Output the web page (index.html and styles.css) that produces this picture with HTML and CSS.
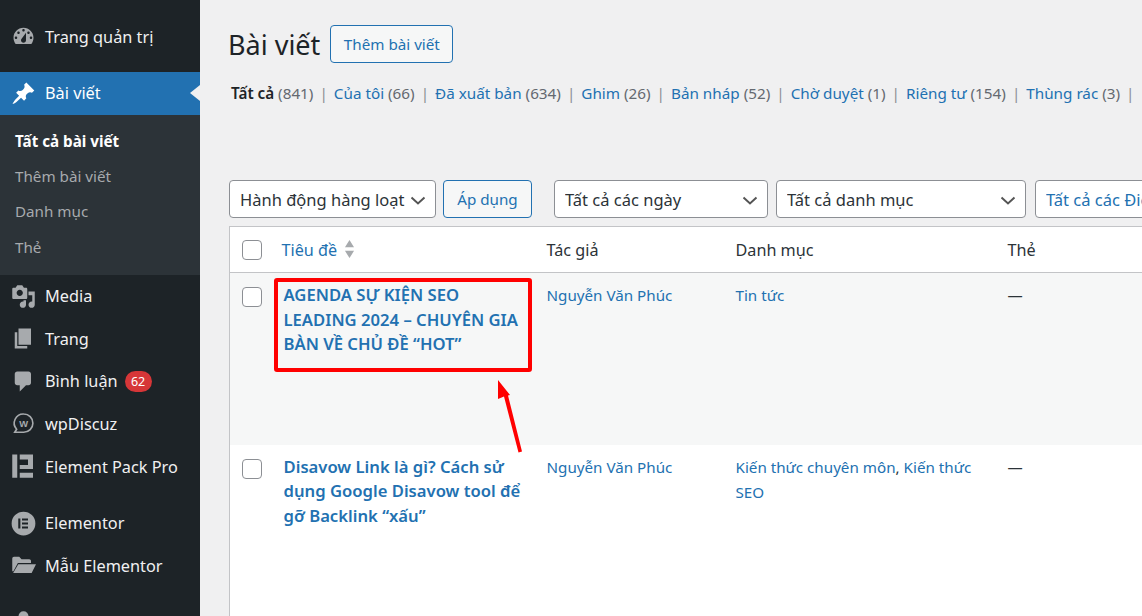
FILE: index.html

```html
<!DOCTYPE html>
<html>
    <head>
        <meta charset="UTF-8">
        <meta name="viewport" content="width=device-width, initial-scale=1.0">
        <title>Bài viết</title>
        <link rel="stylesheet" href="styles.css">
    </head>
    <body>
        <div class="admin">
            <nav class="sidebar">
                <a class="menu-item first" href="#">
                    <svg class="menu-icon" viewBox="0 0 20 20"><path d="M3.76 16h12.48c1.1-1.37 1.76-3.11 1.76-5 0-4.42-3.58-8-8-8s-8 3.58-8 8c0 1.89.66 3.63 1.76 5zM10 4c.55 0 1 .45 1 1s-.45 1-1 1-1-.45-1-1 .45-1 1-1zM6 6c.55 0 1 .45 1 1s-.45 1-1 1-1-.45-1-1 .45-1 1-1zm8 0c.55 0 1 .45 1 1s-.45 1-1 1-1-.45-1-1 .45-1 1-1zm-5.37 5.55L12 7v6c0 1.1-.9 2-2 2s-2-.9-2-2c0-.57.24-1.08.63-1.45zM4 10c.55 0 1 .45 1 1s-.45 1-1 1-1-.45-1-1 .45-1 1-1zm12 0c.55 0 1 .45 1 1s-.45 1-1 1-1-.45-1-1 .45-1 1-1z" fill-rule="evenodd"/></svg>
                    <span>Trang quản trị</span>
                </a>
                <a class="menu-item current" href="#">
                    <svg class="menu-icon" viewBox="0 0 20 20"><path d="M10.44 3.02l1.82-1.82 6.36 6.35-1.83 1.82c-1.05-.68-2.48-.57-3.41.36l-.75.75c-.92.93-1.04 2.35-.35 3.41l-1.83 1.82-2.41-2.41-2.8 2.79c-.42.42-3.38 2.71-3.8 2.29s1.86-3.39 2.28-3.81l2.79-2.79L4.1 9.36l1.83-1.82c1.05.69 2.48.57 3.4-.36l.75-.75c.93-.92 1.05-2.35.36-3.41z"/></svg>
                    <span>Bài viết</span>
                </a>
                <ul class="submenu">
                    <li class="active">Tất cả bài viết</li>
                    <li>Thêm bài viết</li>
                    <li>Danh mục</li>
                    <li>Thẻ</li>
                </ul>
                <a class="menu-item" href="#">
                    <svg class="menu-icon" viewBox="0 0 20 20"><path d="M13 11V4c0-.55-.45-1-1-1h-1.67L9 1H5L3.67 3H2c-.55 0-1 .45-1 1v7c0 .55.45 1 1 1h10c.55 0 1-.45 1-1zM7 4.5c1.38 0 2.5 1.12 2.5 2.5S8.38 9.5 7 9.5 4.5 8.38 4.5 7 5.62 4.5 7 4.5zM14 6h5v10.5c0 1.38-1.12 2.5-2.5 2.5S14 17.88 14 16.5s1.12-2.5 2.5-2.5c.17 0 .34.02.5.05V9h-3V6zm-4 8.05V13h2v3.5c0 1.38-1.12 2.5-2.5 2.5S7 17.88 7 16.5 8.12 14 9.5 14c.17 0 .34.02.5.05z" fill-rule="evenodd"/></svg>
                    <span>Media</span>
                </a>
                <a class="menu-item" href="#">
                    <svg class="menu-icon" viewBox="0 0 20 20"><path d="M6 15V2h10v13H6zm-1 1h8v2H3V5h2v11z"/></svg>
                    <span>Trang</span>
                </a>
                <a class="menu-item" href="#">
                    <svg class="menu-icon" viewBox="0 0 20 20"><path d="M5 2h9c1.1 0 2 .9 2 2v7c0 1.1-.9 2-2 2h-2l-5 5v-5H5c-1.1 0-2-.9-2-2V4c0-1.1.9-2 2-2z"/></svg>
                    <span>Bình luận</span>
                    <b class="badge">62</b>
                </a>
                <a class="menu-item" href="#">
                    <svg class="menu-icon" viewBox="0 0 20 20">
                        <path d="M10.2 2.4a7.3 7.3 0 0 1 0 14.6H3l1.5-2.4a7.3 7.3 0 0 1 5.7-12.2z" fill="none" stroke="#a7aaad" stroke-width="1.3"/>
                        <text x="10.2" y="12.6" text-anchor="middle" class="wp-mark">W</text>
                    </svg>
                    <span>wpDiscuz</span>
                </a>
                <a class="menu-item" href="#">
                    <svg class="menu-icon" viewBox="0 0 20 20"><path d="M1 .4h4V19H1zM7 .4h10.600V12H7V8.800h6.600V4.400H7zM7 15h10.600v4H7z"/></svg>
                    <span>Element Pack Pro</span>
                </a>
                <a class="menu-item spaced" href="#">
                    <svg class="menu-icon" viewBox="0 0 20 20"><path d="M10 .5a9.500 9.500 0 1 0 0 19 9.500 9.500 0 0 0 0-19zM5.800 6h1.700v8H5.800zM8.800 6h4.800v1.600H8.800zM8.800 9.200h4.800v1.600H8.800zM8.800 12.400h4.800V14H8.800z" fill-rule="evenodd"/></svg>
                    <span>Elementor</span>
                </a>
                <a class="menu-item" href="#">
                    <svg class="menu-icon" viewBox="0 0 20 20"><path d="M1 4.500C1 3.700 1.600 3 2.400 3h4.200l1.800 2h6.200c.8 0 1.400.6 1.400 1.400V8H5.500L1.900 14.500H1zM5.800 9H20l-3.500 7H1.700z"/></svg>
                    <span>Mẫu Elementor</span>
                </a>
                <a class="menu-item spaced" href="#">
                    <svg class="menu-icon" viewBox="0 0 20 20"><path d="M10 1a4 4 0 0 1 4 4v3H6V5a4 4 0 0 1 4-4z"/></svg>
                    <span>Giao diện</span>
                </a>
            </nav>

            <main class="content">
                <div class="title-row">
                    <h1>Bài viết</h1>
                    <a class="btn add-new" href="#">Thêm bài viết</a>
                </div>

                <ul class="views">
                    <li><a class="on" href="#">Tất cả</a> <span>(841)</span></li>
                    <li><a href="#">Của tôi</a> <span>(66)</span></li>
                    <li><a href="#">Đã xuất bản</a> <span>(634)</span></li>
                    <li><a href="#">Ghim</a> <span>(26)</span></li>
                    <li><a href="#">Bản nháp</a> <span>(52)</span></li>
                    <li><a href="#">Chờ duyệt</a> <span>(1)</span></li>
                    <li><a href="#">Riêng tư</a> <span>(154)</span></li>
                    <li><a href="#">Thùng rác</a> <span>(3)</span></li>
                </ul>

                <div class="filters">
                    <select class="bulk"><option>Hành động hàng loạt</option></select>
                    <a class="btn apply" href="#">Áp dụng</a>
                    <select class="dates"><option>Tất cả các ngày</option></select>
                    <select class="cats"><option>Tất cả danh mục</option></select>
                    <select class="extra"><option>Tất cả các Điểm SEO</option></select>
                </div>

                <table class="posts">
                    <thead>
                        <tr>
                            <th class="col-cb"><input type="checkbox"></th>
                            <th class="col-title"><a href="#">Tiêu đề</a>
                                <svg class="sort" viewBox="0 0 12 22"><path d="M6 1l5 8H1zM6 21l-5-8h10z"/></svg>
                            </th>
                            <th class="col-author">Tác giả</th>
                            <th class="col-cat">Danh mục</th>
                            <th class="col-tags">Thẻ</th>
                        </tr>
                    </thead>
                    <tbody>
                        <tr class="row-alt">
                            <td><input type="checkbox"></td>
                            <td class="post-title"><a href="#">AGENDA SỰ KIỆN SEO LEADING 2024 – CHUYÊN GIA BÀN VỀ CHỦ ĐỀ “HOT”</a></td>
                            <td><a href="#">Nguyễn Văn Phúc</a></td>
                            <td><a href="#">Tin tức</a></td>
                            <td>—</td>
                        </tr>
                        <tr>
                            <td><input type="checkbox"></td>
                            <td class="post-title"><a href="#">Disavow Link là gì? Cách sử dụng Google Disavow tool để gỡ Backlink “xấu”</a></td>
                            <td><a href="#">Nguyễn Văn Phúc</a></td>
                            <td><a href="#">Kiến thức chuyên môn</a>, <a href="#">Kiến thức SEO</a></td>
                            <td>—</td>
                        </tr>
                    </tbody>
                </table>

                <!-- annotation on top of the screenshot -->
                <div class="mark-box"></div>
                <svg class="mark-arrow" viewBox="0 0 40 80"><path d="M7 2L7 21l6-2.500L27.500 74.500 31 73.500 17 17.500l2-.5z"/></svg>
            </main>
        </div>
    </body>
</html>
```

FILE: styles.css

```css
* {
    box-sizing: border-box;
}
html, body {
    margin: 0;
    height: 100%;
    overflow: hidden;
}
body {
    background: #f0f0f1;
    color: #2c3338;
    font-family: "Noto Sans", "Open Sans", sans-serif;
    font-size: 15px;
}
a {
    color: #2271b1;
    text-decoration: none;
}
.admin {
    display: flex;
    height: 616px;
}

/* sidebar */
.sidebar {
    flex: 0 0 200px;
    background: #1d2327;
    padding-top: 15.500px;
    overflow: hidden;
}
.menu-item {
    display: flex;
    align-items: center;
    height: 42.600px;
    padding-left: 11px;
    color: #f0f0f1;
    font-size: 16.300px;
    position: relative;
}
.menu-item.first {
    margin-bottom: 14px;
}
.menu-item.spaced {
    margin-top: 14px;
}
.menu-icon {
    width: 25px;
    height: 25px;
    margin-right: 9px;
    flex: none;
    fill: #a7aaad;
}
.wp-mark {
    font-family: "Liberation Sans", sans-serif;
    font-size: 7.500px;
    font-weight: bold;
    fill: #a7aaad;
}
.menu-item.current {
    background: #2271b1;
    color: #fff;
}
.menu-item.current .menu-icon {
    fill: #fff;
}
.menu-item.current::after {
    content: "";
    position: absolute;
    right: 0;
    top: 13px;
    border: 8px solid transparent;
    border-left: 0;
    border-right: 10px solid #f0f0f1;
}
.badge {
    margin-left: 7px;
    min-width: 27px;
    height: 21px;
    line-height: 21px;
    padding: 0 6px;
    border-radius: 11px;
    background: #d63638;
    color: #fff;
    font-size: 12.500px;
    font-weight: normal;
    text-align: center;
}
.submenu {
    list-style: none;
    margin: 0;
    padding: 9px 0 10px 15px;
    background: #2c3338;
    color: #a7aaad;
    font-size: 15.200px;
}
.submenu li {
    height: 35.300px;
    line-height: 35.300px;
}
.submenu .active {
    color: #fff;
    font-weight: 700;
}

/* main column */
.content {
    flex: 1;
    min-width: 0;
    padding: 25px 0 0 29px;
    position: relative;
    overflow: hidden;
}
.title-row {
    display: flex;
    align-items: center;
    height: 38px;
    margin-left: -1px;
}
h1 {
    margin: 0 10px 0 0;
    font-size: 27px;
    font-weight: 400;
    color: #1d2327;
}
.btn {
    display: flex;
    align-items: center;
    justify-content: center;
    flex: none;
    border: 1px solid #2271b1;
    border-radius: 4px;
    background: #f6f7f7;
    font-size: 15.200px;
}
.add-new {
    width: 123px;
    height: 38px;
}
.views {
    display: flex;
    list-style: none;
    margin: 19px 0 0 2px;
    padding: 0;
    height: 22px;
    line-height: 22px;
    white-space: nowrap;
    font-size: 15.250px;
    color: #646970;
}
.views li::after {
    content: "|";
    margin: 0 6px;
    color: #8c8f94;
}
.views .on {
    color: #1d2327;
    font-weight: 600;
}
.filters {
    display: flex;
    margin-top: 76px;
    height: 38px;
}
select {
    appearance: none;
    flex: none;
    height: 38px;
    padding: 0 30px 0 10px;
    border: 1px solid #8c8f94;
    border-radius: 4px;
    color: #2c3338;
    font-family: inherit;
    font-size: 16.500px;
    background: #fff url("data:image/svg+xml;utf8,<svg xmlns='http://www.w3.org/2000/svg' viewBox='0 0 20 20'><path d='M3.500 7.500L10 13.500l6.500-6' fill='none' stroke='%23555' stroke-width='2'/></svg>") no-repeat right 7px top 9px / 20px 20px;
}
.bulk {
    width: 207px;
}
.apply {
    width: 89px;
    height: 38px;
    margin: 0 22px 0 7px;
}
.dates {
    width: 214px;
    margin-right: 8px;
}
.cats {
    width: 250px;
    margin-right: 9px;
}
.extra {
    width: 240px;
    color: #2271b1;
}

/* posts table */
.posts {
    width: 1100px;
    margin-top: 8px;
    border-collapse: collapse;
    table-layout: fixed;
    background: #fff;
    border: 1px solid #c3c4c7;
}
.posts th, .posts td {
    padding: 10px 8px 8px;
    text-align: left;
    vertical-align: top;
    font-size: 15.200px;
    line-height: 25px;
    font-weight: 400;
}
.posts thead th {
    height: 45px;
    padding: 8px 8px 7px;
    font-size: 16.200px;
    line-height: 30px;
    color: #2c3338;
    border-bottom: 1px solid #c3c4c7;
    white-space: nowrap;
}
.col-cb { width: 44px; }
.col-title { width: 265px; }
.col-author { width: 189px; }
.col-cat { width: 272px; }
.posts input[type=checkbox] {
    appearance: none;
    display: block;
    width: 20px;
    height: 20px;
    margin: 5px 0 0 4px;
    background: #fff;
    border: 1px solid #8c8f94;
    border-radius: 4px;
}
.posts tbody td input[type=checkbox] {
    margin-top: 4px;
}
.sort {
    width: 11px;
    height: 20px;
    margin-left: 3px;
    vertical-align: -3px;
    fill: #a7aaad;
}
.posts td.post-title {
    padding-left: 10px;
    font-size: 16.650px;
    line-height: 24.500px;
    font-weight: 600;
}
.row-alt td {
    height: 172px;
    background: #f6f7f7;
}
.posts tbody tr:last-child td {
    height: 200px;
}

/* red annotation */
.mark-box {
    position: absolute;
    left: 74px;
    top: 278px;
    width: 258px;
    height: 94px;
    border: 4px solid #f00;
    border-radius: 3px;
}
.mark-arrow {
    position: absolute;
    left: 291px;
    top: 378px;
    width: 40px;
    height: 80px;
    fill: #f00;
}
```
